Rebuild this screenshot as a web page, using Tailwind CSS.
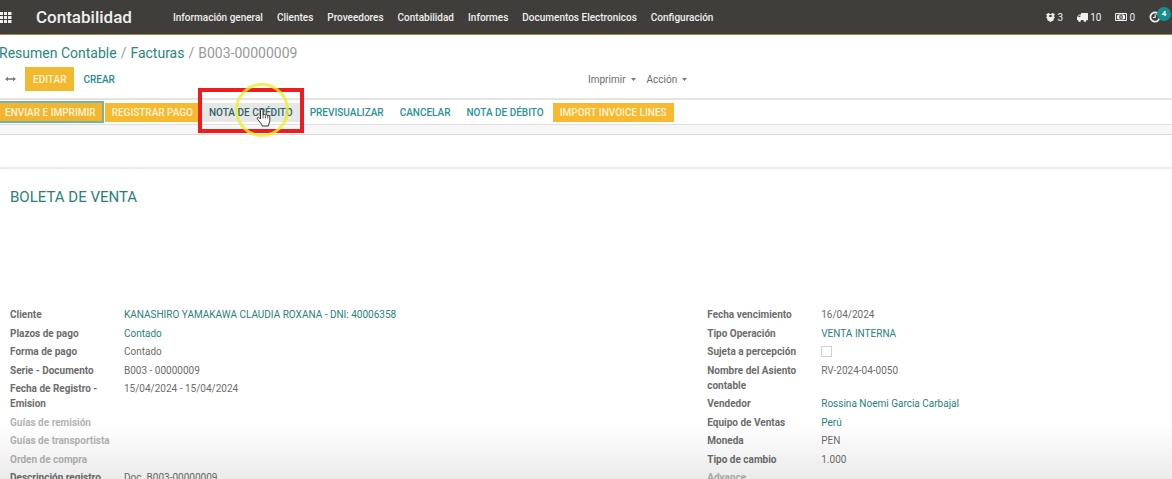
<!DOCTYPE html>
<html lang="es">
<head>
<meta charset="utf-8">
<meta name="viewport" content="width=device-width, initial-scale=1">
<title>Contabilidad - B003-00000009</title>
<script src="https://cdn.jsdelivr.net/npm/@tailwindcss/browser@4"></script>
</head>
<body class="relative h-screen overflow-hidden bg-white font-['Roboto',sans-serif] text-[10px] leading-[15px] text-[#6c6c6c]">
<header class="flex h-[35px] items-center border-b border-[#a5843c] bg-[#403e3b] text-[#efefef]">
  <button type="button" aria-label="Aplicaciones" class="w-9 shrink-0">
    <svg class="h-[11px] w-3" viewBox="0 0 12 11" fill="currentColor"><path d="M0 0h3v3H0zM4 0h3v3H4zM8 0h3.500v3H8zM0 4h3v3H0zM4 4h3v3H4zM8 4h3.500v3H8zM0 8h3v3H0zM4 8h3v3H4zM8 8h3.500v3H8z"/></svg>
  </button>
  <a href="#" class="mr-[41px] text-[17px] leading-5 font-medium">Contabilidad</a>
  <nav class="flex gap-[14px] font-medium whitespace-nowrap">
    <a href="#">Información general</a><a href="#">Clientes</a><a href="#">Proveedores</a><a href="#">Contabilidad</a><a href="#">Informes</a><a href="#">Documentos Electronicos</a><a href="#">Configuración</a>
  </nav>
  <div class="ml-auto flex items-center gap-[14px]">
    <a href="#" class="flex items-center gap-[3px]"><svg class="h-[9px] w-[9px]" viewBox="0 0 9 9" fill="currentColor"><path d="M0 1.300 2.600 0 4.500 1.300 6.400 0 9 1.300 7.800 3 9 4.600 7.700 5.600V7.300L4.500 9 1.300 7.300V5.600L0 4.600 1.200 3z"/><path d="M4.500 1.700 6.600 3 4.500 4.300 2.400 3z" fill="#403e3b"/></svg>3</a>
    <a href="#" class="flex items-center gap-[2px]"><svg class="h-[9px] w-[11px]" viewBox="0 0 11 9" fill="currentColor"><path d="M4 0h7v7H0V4l2-2.500h2z"/><path d="M1 4 2.300 2.500h1V4z" fill="#403e3b"/><circle cx="2.500" cy="7.500" r="1.400"/><circle cx="8" cy="7.500" r="1.400"/></svg>10</a>
    <a href="#" class="flex items-center gap-[2px]"><svg class="h-2 w-3" viewBox="0 0 12 8"><path d="M.5.5h11v7H.5z" fill="none" stroke="currentColor"/><path d="M2 2.500 3 1.500h6l1 1v3l-1 1H3l-1-1z" fill="currentColor"/><ellipse cx="6" cy="4" rx="1.800" ry="2.300" fill="#403e3b"/><path d="M6 2.500v3" stroke="currentColor"/></svg>0</a>
    <button type="button" aria-label="Actividades: 4" class="relative h-[14px] w-[23px]">
      <svg class="h-3 w-3" viewBox="0 0 12 12" fill="none" stroke="currentColor" stroke-width="1.800"><path d="M8.500 2.200A4.600 4.600 0 1 0 10.600 6"/><path d="M6.200 3.500v3H4" stroke-width="1.200"/><path d="M7 4h4V0z" fill="currentColor" stroke="none"/></svg>
      <span class="absolute -top-[3px] right-[1px] size-[14px] rounded-full bg-[#12918f] text-center text-[8px] leading-[14px] font-bold text-white">4</span>
    </button>
  </div>
</header>

<section class="border-b-2 border-[#e4e4e7]">
  <nav aria-label="Ruta" class="-ml-px flex gap-[3px] pt-2 text-[14px] leading-5 whitespace-nowrap text-[#999]">
    <a href="#" class="text-[#2a8581]">Resumen Contable</a><span class="px-px">/</span><a href="#" class="text-[#2a8581]">Facturas</a><span class="px-px">/</span><span>B003-00000009</span>
  </nav>
  <div class="flex items-center pt-1 pb-[7px]">
    <div class="flex w-1/2 items-center">
      <svg class="mr-[9px] ml-[5px] h-[6px] w-[11px]" viewBox="0 0 11 6" fill="#777"><path d="M0 3 3 .8v1.500h5V.8L11 3 8 5.200V3.700H3v1.500z"/></svg>
      <button type="button" class="h-6 bg-[#f2b830] px-2 font-medium text-[#fff3d8]">EDITAR</button>
      <button type="button" class="h-6 px-[9px] font-medium text-[#2a8c8c]">CREAR</button>
    </div>
    <div class="flex gap-[11px] pl-[2px]">
      <button type="button" class="flex items-center gap-[5px]">Imprimir<svg class="h-[3px] w-[5px]" viewBox="0 0 5 3" fill="#777"><path d="M0 0h5L2.500 3z"/></svg></button>
      <button type="button" class="flex items-center gap-[5px]">Acción<svg class="h-[3px] w-[5px]" viewBox="0 0 5 3" fill="#777"><path d="M0 0h5L2.500 3z"/></svg></button>
    </div>
  </div>
</section>

<section class="flex h-[25px] items-center gap-px border-b border-[#dedee1] font-medium whitespace-nowrap text-[#2a9291]">
  <button type="button" class="-ml-[3px] h-[22px] border-2 border-[#74b5a0] bg-[#f2b52f] px-[6px] leading-[15px] text-[#fff3d8]">ENVIAR E IMPRIMIR</button>
  <button type="button" class="h-[19px] bg-[#f6b930] px-[7px] text-[#fff3d8]">REGISTRAR PAGO</button>
  <div class="relative">
    <button type="button" class="h-[19px] bg-[#e7e7e7] px-2 text-[#2f6467]">NOTA DE CRÉDITO</button>
    <div class="pointer-events-none absolute -inset-x-[3px] -top-[15px] h-[45px] border-4 border-[#ec1c1f]"></div>
    <div class="pointer-events-none absolute -top-[20px] left-[34px] size-[54px] rounded-full border-3 border-[#e9ef2c]/80"></div>
    <svg class="pointer-events-none absolute top-[5px] left-[55px] h-[19px] w-[15px]" viewBox="0 0 15 19"><path d="M4.500 11V2.300C4.500.6 7 .6 7 2.300V7c.3-1.200 2.300-1 2.400.3.500-1 2.200-.7 2.300.5.700-.8 2.100-.3 2.100 1v4c0 1.600-1.300 2.500-1.300 5.200H6.200C6 16 3.300 13.500 1.500 11.200.6 9.800 2.300 8.700 3.300 9.800z" fill="#fff" stroke="#333"/><path d="M7 7v3.500M9.400 7.500v3M11.700 8v2.500" stroke="#333" stroke-width=".8"/></svg>
  </div>
  <button type="button" class="h-[19px] px-2">PREVISUALIZAR</button>
  <button type="button" class="h-[19px] px-[7px]">CANCELAR</button>
  <button type="button" class="h-[19px] px-2">NOTA DE DÉBITO</button>
  <button type="button" class="h-[19px] bg-[#f6b930] px-[7px] text-[#fff3d8]">IMPORT INVOICE LINES</button>
</section>
<div class="h-[10px] border-b border-[#d8d8d8] bg-[#f7f7f8]"></div>
<div class="h-[34px] border-b-2 border-[#ebebeb]"></div>

<main class="px-[10px] pt-[18px]">
  <h1 class="mb-[100px] text-[15px] leading-5 text-[#2a7f7c]">BOLETA DE VENTA</h1>
  <div class="grid grid-cols-[23fr_15fr]">
    <dl>
      <div class="flex odd:pb-1 even:pb-[3px]"><dt class="w-[114px] shrink-0 pr-3 font-bold">Cliente</dt><dd><a href="#" class="text-[#2a7f7c]">KANASHIRO YAMAKAWA CLAUDIA ROXANA - DNI: 40006358</a></dd></div>
      <div class="flex odd:pb-1 even:pb-[3px]"><dt class="w-[114px] shrink-0 pr-3 font-bold">Plazos de pago</dt><dd><a href="#" class="text-[#2a7f7c]">Contado</a></dd></div>
      <div class="flex odd:pb-1 even:pb-[3px]"><dt class="w-[114px] shrink-0 pr-3 font-bold">Forma de pago</dt><dd>Contado</dd></div>
      <div class="flex odd:pb-1 even:pb-[3px]"><dt class="w-[114px] shrink-0 pr-3 font-bold">Serie - Documento</dt><dd>B003 - 00000009</dd></div>
      <div class="flex odd:pb-1 even:pb-[3px]"><dt class="w-[114px] shrink-0 pr-3 font-bold">Fecha de Registro - Emision</dt><dd>15/04/2024 - 15/04/2024</dd></div>
      <div class="flex odd:pb-1 even:pb-[3px]"><dt class="w-[114px] shrink-0 font-bold text-[#b3b3b3]">Guías de remisión</dt><dd></dd></div>
      <div class="flex odd:pb-1 even:pb-[3px]"><dt class="w-[114px] shrink-0 font-bold text-[#b3b3b3]">Guías de transportista</dt><dd></dd></div>
      <div class="flex odd:pb-1 even:pb-[3px]"><dt class="w-[114px] shrink-0 font-bold text-[#b3b3b3]">Orden de compra</dt><dd></dd></div>
      <div class="flex odd:pb-1 even:pb-[3px]"><dt class="w-[114px] shrink-0 pr-3 font-bold">Descripción registro</dt><dd>Doc. B003-00000009</dd></div>
    </dl>
    <dl>
      <div class="flex odd:pb-1 even:pb-[3px]"><dt class="w-[114px] shrink-0 pr-3 font-bold">Fecha vencimiento</dt><dd>16/04/2024</dd></div>
      <div class="flex odd:pb-1 even:pb-[3px]"><dt class="w-[114px] shrink-0 pr-3 font-bold">Tipo Operación</dt><dd><a href="#" class="text-[#2a7f7c]">VENTA INTERNA</a></dd></div>
      <div class="flex odd:pb-1 even:pb-[3px]"><dt class="w-[114px] shrink-0 font-bold"><label for="percepcion">Sujeta a percepción</label></dt><dd class="flex items-center"><input id="percepcion" type="checkbox" class="size-[11px] appearance-none border border-[#d0d0d0] bg-white"></dd></div>
      <div class="flex odd:pb-1 even:pb-[3px]"><dt class="w-[114px] shrink-0 pr-3 font-bold">Nombre del Asiento contable</dt><dd>RV-2024-04-0050</dd></div>
      <div class="flex odd:pb-1 even:pb-[3px]"><dt class="w-[114px] shrink-0 pr-3 font-bold">Vendedor</dt><dd><a href="#" class="text-[#2a7f7c]">Rossina Noemi Garcia Carbajal</a></dd></div>
      <div class="flex odd:pb-1 even:pb-[3px]"><dt class="w-[114px] shrink-0 pr-3 font-bold">Equipo de Ventas</dt><dd><a href="#" class="text-[#2a7f7c]">Perú</a></dd></div>
      <div class="flex odd:pb-1 even:pb-[3px]"><dt class="w-[114px] shrink-0 pr-3 font-bold">Moneda</dt><dd>PEN</dd></div>
      <div class="flex odd:pb-1 even:pb-[3px]"><dt class="w-[114px] shrink-0 pr-3 font-bold">Tipo de cambio</dt><dd>1.000</dd></div>
      <div class="flex odd:pb-1 even:pb-[3px]"><dt class="w-[114px] shrink-0 font-bold text-[#b3b3b3]">Advance</dt><dd></dd></div>
    </dl>
  </div>
</main>
<div class="pointer-events-none absolute inset-x-0 bottom-0 h-14 bg-linear-to-t from-black/8 to-transparent"></div>
</body>
</html>
